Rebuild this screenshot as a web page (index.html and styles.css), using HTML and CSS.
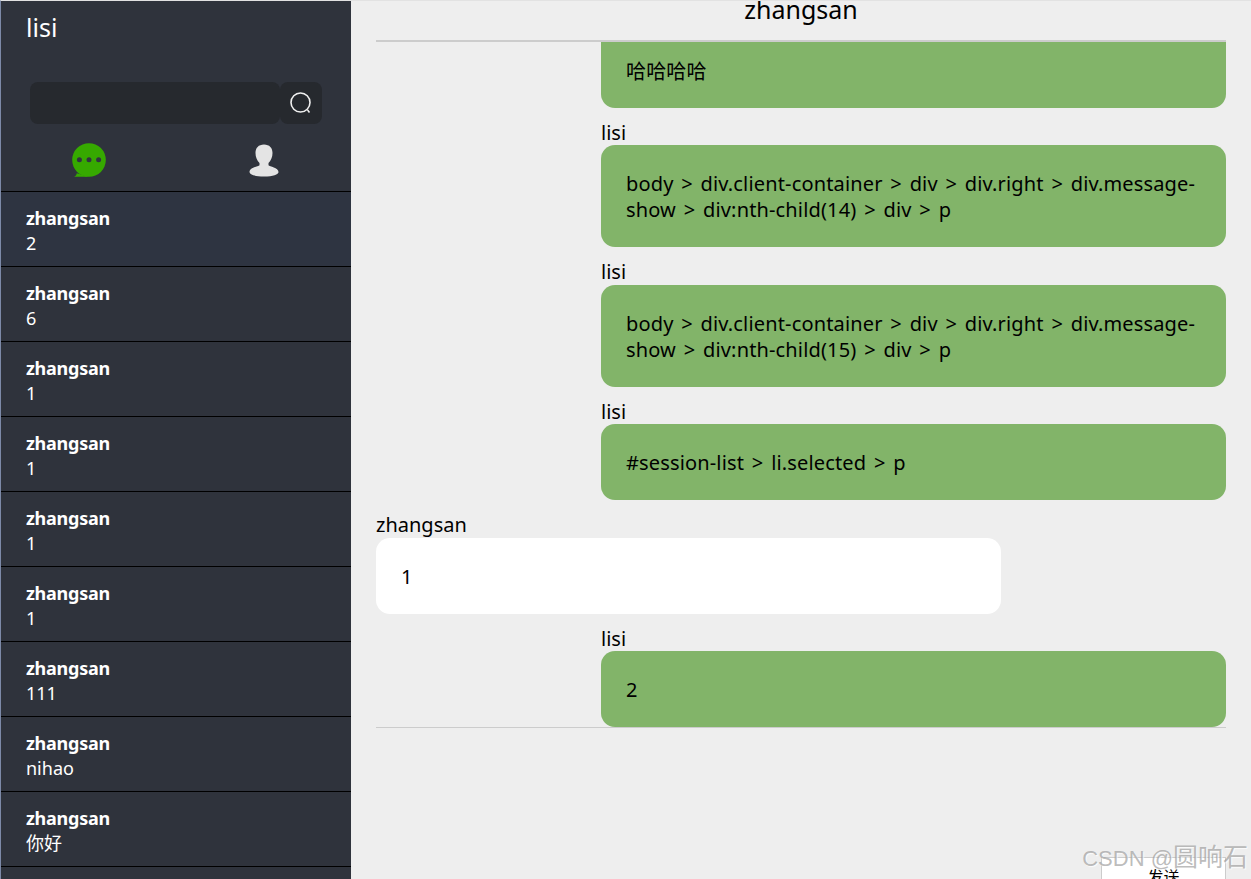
FILE: index.html
```html
<!DOCTYPE html>
<html lang="zh">
<head>
<meta charset="utf-8">
<title>聊天室</title>
<link rel="stylesheet" href="styles.css">
</head>
<body>
<div class="client">
  <aside class="left">
    <div class="user">lisi</div>
    <div class="search">
      <input class="search-input" type="text">
      <button class="search-btn" type="button" aria-label="搜索">
        <svg width="24" height="24" viewBox="0 0 24 24" fill="none" stroke="#f0f0f0"><circle cx="11.5" cy="11.5" r="9.5" stroke-width="1.6"/><path d="M18.5 19l2 2.4" stroke-width="1.6"/></svg>
      </button>
    </div>
    <div class="tabs">
      <div class="tab">
        <svg width="34" height="34" viewBox="0 0 34 34"><circle cx="17" cy="17" r="16.800" fill="#36a900"/><path d="M2 33.800c1.500-.5 2.500-1.600 2.800-3.500L17 33.800z" fill="#36a900"/><g fill="#30353f"><circle cx="7.400" cy="16.800" r="2.500"/><circle cx="17" cy="16.800" r="2.500"/><circle cx="26.600" cy="16.800" r="2.500"/></g></svg>
      </div>
      <div class="tab">
        <svg width="30" height="33" viewBox="0 0 30 33"><path d="M15 .5c5.500 0 8.500 3.500 8.500 8.500 0 4-1.500 7.500-4 10v2.200c1 1.500 10 2 10 6.800 0 2.500-5.500 4.500-14.500 4.500S.5 30.500.5 28c0-4.800 9-5.300 10-6.800V19c-2.500-2.500-4-6-4-10C6.500 4 9.500.5 15 .5z" fill="#e4e4e4"/></svg>
      </div>
    </div>
    <ul class="sessions">
      <li class="session selected"><h3>zhangsan</h3><p>2</p></li>
      <li class="session"><h3>zhangsan</h3><p>6</p></li>
      <li class="session"><h3>zhangsan</h3><p>1</p></li>
      <li class="session"><h3>zhangsan</h3><p>1</p></li>
      <li class="session"><h3>zhangsan</h3><p>1</p></li>
      <li class="session"><h3>zhangsan</h3><p>1</p></li>
      <li class="session"><h3>zhangsan</h3><p>111</p></li>
      <li class="session"><h3>zhangsan</h3><p>nihao</p></li>
      <li class="session"><h3>zhangsan</h3><p>你好</p></li>
    </ul>
  </aside>
  <main class="right">
    <div class="title">zhangsan</div>
    <div class="messages">
      <div class="msg mine"><div class="bubble first"><p>哈哈哈哈</p></div></div>
      <div class="msg mine"><div class="name">lisi</div><div class="bubble"><p>body &gt; div.client-container &gt; div &gt; div.right &gt; div.message-show &gt; div:nth-child(14) &gt; div &gt; p</p></div></div>
      <div class="msg mine"><div class="name">lisi</div><div class="bubble"><p>body &gt; div.client-container &gt; div &gt; div.right &gt; div.message-show &gt; div:nth-child(15) &gt; div &gt; p</p></div></div>
      <div class="msg mine"><div class="name">lisi</div><div class="bubble"><p>#session-list &gt; li.selected &gt; p</p></div></div>
      <div class="msg"><div class="name">zhangsan</div><div class="bubble white"><p>1</p></div></div>
      <div class="msg mine"><div class="name">lisi</div><div class="bubble"><p>2</p></div></div>
    </div>
    <div class="composer"><button class="send" type="button">发送</button></div>
  </main>
</div>
<div class="watermark">CSDN @<span class="watermark-cjk">圆响石</span></div>
</body>
</html>
```
FILE: styles.css
```css
* { box-sizing: border-box; }
html, body { height: 100%; }
body {
  margin: 0;
  height: 879px;
  overflow: hidden;
  background: #eeeeee;
  font-family: "Noto Sans", "Noto Sans CJK SC", sans-serif;
  color: #000;
  border-top: 1px solid #e2e2e2;
  border-left: 1px solid #7d8aa8;
}
.client { display: flex; height: 878px; }
.left { width: 350px; flex: none; background: #2f333c; color: #fff; overflow: hidden; }
.user { height: 57px; padding-left: 25px; font-size: 25px; line-height: 52px; }
.search { display: flex; height: 42px; margin: 24px 0 0 29px; }
.search-input { width: 250px; height: 42px; border: 0; border-radius: 8px; background: #26292e; padding: 0; }
.search-btn { width: 42px; height: 42px; border: 0; border-radius: 8px; background: #26292e; padding: 0; display: flex; align-items: center; justify-content: center; }
.tabs { display: flex; height: 67px; padding-top: 19px; }
.tab { width: 175px; height: 34px; display: flex; align-items: center; justify-content: center; }
.sessions { list-style: none; margin: 0; padding: 0; border-top: 1px solid #000; }
.session { height: 75px; padding: 14px 0 0 25px; border-bottom: 1px solid #000; font-size: 18px; line-height: 25px; }
.session.selected { background: #2e3441; }
.session h3 { margin: 0; font-size: 18px; font-weight: 700; line-height: 25px; letter-spacing: -0.25px; }
.session p { margin: 0; font-size: 18px; line-height: 25px; }
.right { flex: 1; padding: 0 25px; display: flex; flex-direction: column; }
.title { height: 41px; flex: none; border-bottom: 2px solid #cccccc; text-align: center; font-size: 25px; line-height: 17px; }
.messages { height: 686px; flex: none; overflow: hidden; display: flex; flex-direction: column; justify-content: flex-end; border-bottom: 1px solid #cccccc; }
.msg { flex: none; width: 625px; margin-top: 12px; font-size: 20px; line-height: 26px; }
.msg.mine { align-self: flex-end; }
.name { height: 25.5px; line-height: 25px; }
.bubble { background: #82b469; border-radius: 14px; padding: 26px 25px 24px; }
.bubble.first { padding-top: 17px; border-radius: 0 0 14px 14px; height: 66px; }
.bubble.white { background: #fff; }
.bubble p { margin: 0; letter-spacing: 0.15px; word-spacing: 2.4px; }
.composer { flex: 1; display: flex; justify-content: flex-end; padding-top: 129px; }
.send { width: 125px; height: 40px; flex: none; border: 1px solid #cccccc; background: #fff; padding: 0; font: inherit; font-size: 16px; line-height: 38px; }
.watermark { position: absolute; right: 3px; bottom: 5px; font-size: 22px; line-height: 30px; color: rgba(150,150,150,.65); text-shadow: 1px 1px 1px rgba(255,255,255,.8); font-family: "Liberation Sans", "Noto Sans CJK SC", sans-serif; white-space: nowrap; }
.watermark-cjk { font-size: 25px; }
```
